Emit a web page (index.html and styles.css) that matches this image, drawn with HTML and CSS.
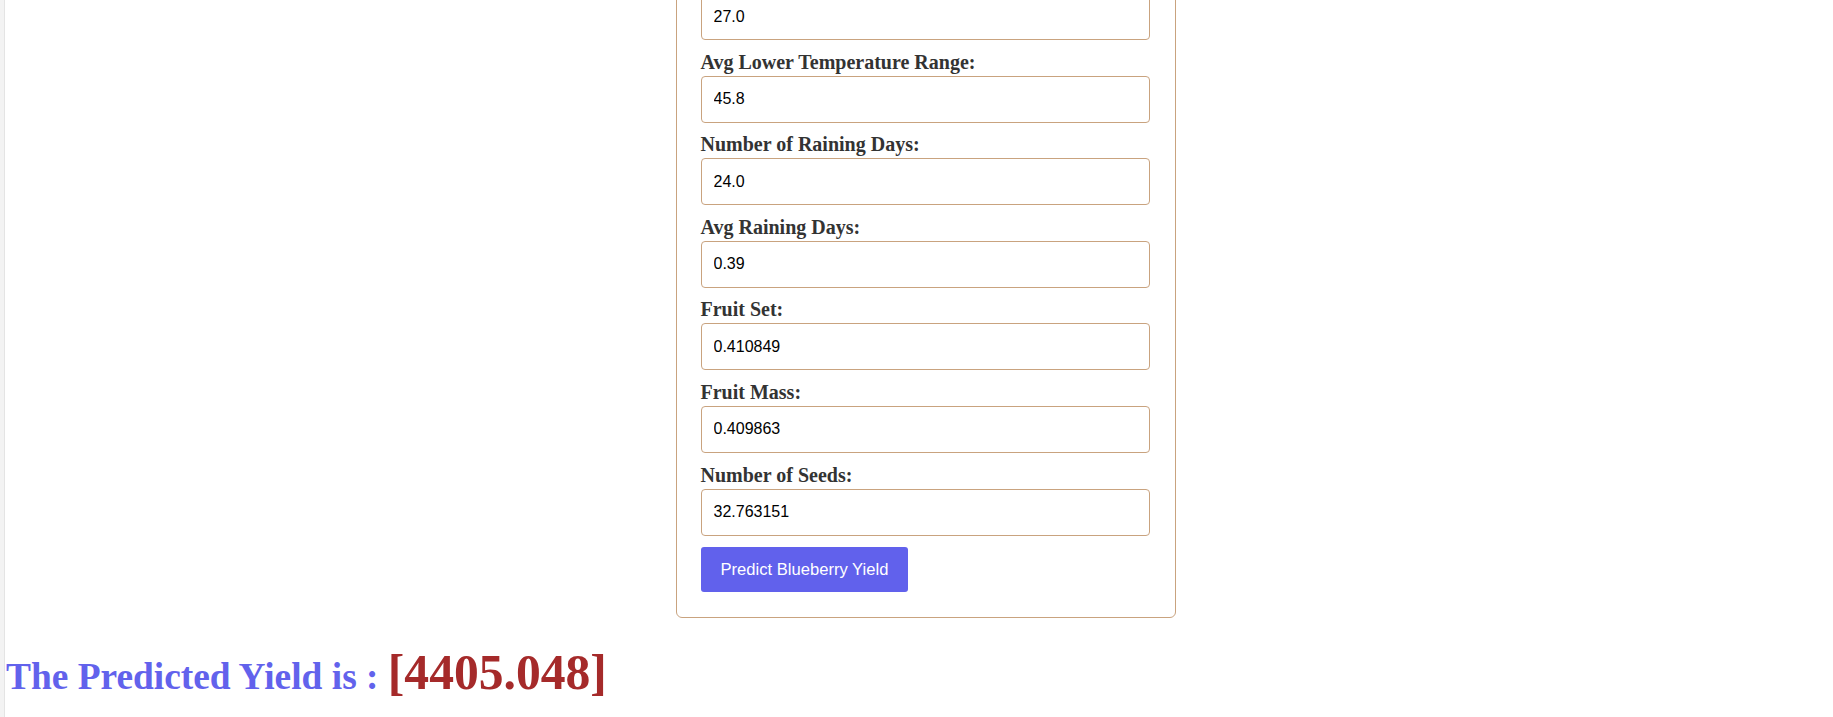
FILE: index.html
```html
<!DOCTYPE html>
<html lang="en">
<head>
<meta charset="utf-8">
<title>Blueberry Yield Prediction</title>
<link rel="stylesheet" href="styles.css">
</head>
<body>
<div class="edge"></div>
<main class="page">
  <div class="stage">
    <form class="card">
      <div class="field">
        <label for="minlow">Min Lower Temperature Range:</label>
        <input id="minlow" type="text" value="27.0">
      </div>
      <div class="field">
        <label for="avglow">Avg Lower Temperature Range:</label>
        <input id="avglow" type="text" value="45.8">
      </div>
      <div class="field">
        <label for="rdays">Number of Raining Days:</label>
        <input id="rdays" type="text" value="24.0">
      </div>
      <div class="field">
        <label for="avgrain">Avg Raining Days:</label>
        <input id="avgrain" type="text" value="0.39">
      </div>
      <div class="field">
        <label for="fset">Fruit Set:</label>
        <input id="fset" type="text" value="0.410849">
      </div>
      <div class="field">
        <label for="fmass">Fruit Mass:</label>
        <input id="fmass" type="text" value="0.409863">
      </div>
      <div class="field">
        <label for="seeds">Number of Seeds:</label>
        <input id="seeds" type="text" value="32.763151">
      </div>
      <button type="button" class="predict">Predict Blueberry Yield</button>
    </form>
  </div>
  <h1 class="result">The Predicted Yield is : <span class="value">[4405.048]</span></h1>
</main>
</body>
</html>
```
FILE: styles.css
```css
html, body {
  margin: 0;
  padding: 0;
  background: #ffffff;
}

body {
  font-family: "Liberation Serif", "Times New Roman", serif;
  overflow: hidden;
}

.edge {
  position: fixed;
  left: 0;
  top: 0;
  bottom: 0;
  width: 4px;
  background: #f3f3f3;
  border-right: 1px solid #e4e4e4;
}

.page {
  padding-left: 5px;
}

.stage {
  display: flex;
  justify-content: center;
  padding-left: 13px;
}

.card {
  width: 500px;
  box-sizing: border-box;
  margin-top: -57px;
  padding: 24px 25px 25px 24px;
  border: 1px solid #c9a37f;
  border-radius: 6px;
  display: flex;
  flex-direction: column;
  align-items: flex-start;
}

.field {
  width: 100%;
  margin-bottom: 10.6px;
}

.field label {
  display: block;
  font-family: "Liberation Serif", "Times New Roman", serif;
  font-weight: bold;
  font-size: 20px;
  line-height: 22px;
  color: #333333;
  margin-bottom: 3px;
}

.field input {
  display: block;
  width: 100%;
  box-sizing: border-box;
  height: 47px;
  padding: 0 12px;
  font-family: "Liberation Sans", Arial, sans-serif;
  font-size: 16px;
  color: #000000;
  border: 1px solid #c9a37f;
  border-radius: 4px;
  background: #ffffff;
  outline: none;
}

.predict {
  margin-top: 1px;
  height: 45px;
  padding: 0 20px;
  background: #6161ec;
  color: #ffffff;
  border: none;
  border-radius: 3px;
  font-family: "Liberation Sans", Arial, sans-serif;
  font-size: 16.6px;
}

.result {
  margin: 26px 0 0 1px;
  font-family: "Liberation Serif", "Times New Roman", serif;
  font-weight: bold;
  font-size: 37.4px;
  color: #6262ec;
}

.result .value {
  font-size: 49.6px;
  color: #a52a2a;
}
```
